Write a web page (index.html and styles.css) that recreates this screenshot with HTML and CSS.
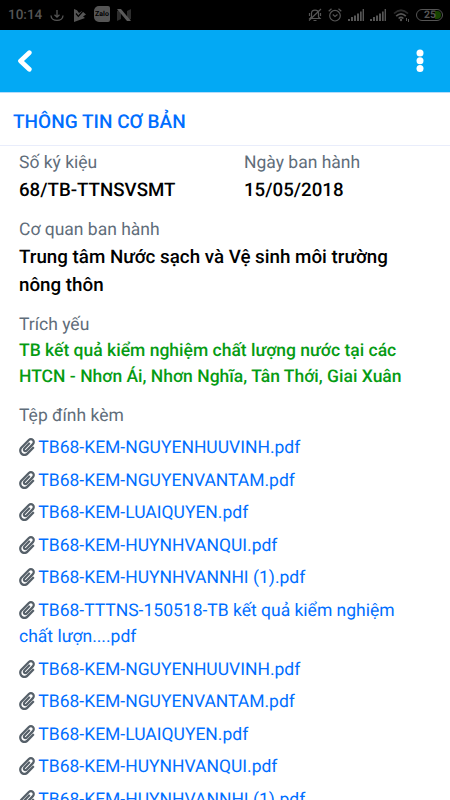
FILE: index.html
```html
<!DOCTYPE html>
<html lang="vi">
<head>
<meta charset="utf-8">
<title>Thông tin cơ bản</title>
<link rel="stylesheet" href="styles.css">
</head>
<body>
<svg width="0" height="0" class="defs">
  <symbol id="clip" viewBox="0 0 448 512"><path d="M43.246 466.142c-58.43-60.289-57.341-157.511 1.386-217.581L254.392 34c44.316-45.332 116.351-45.336 160.671 0 43.89 44.894 43.943 117.329 0 162.276L232.214 383.128c-29.855 30.537-78.633 30.111-107.982-.998-28.275-29.970-27.368-77.473 1.452-106.953l143.743-146.835c6.182-6.314 16.312-6.422 22.626-.241l22.861 22.379c6.315 6.182 6.422 16.312.241 22.626L171.427 319.927c-4.932 5.045-5.236 13.428-.648 18.292 4.372 4.634 11.245 4.711 15.688.165l182.849-186.851c19.613-20.062 19.613-52.725-.011-72.798-19.189-19.627-49.957-19.637-69.154 0L90.390 293.295c-34.763 35.560-35.299 93.120-1.191 128.313 34.010 35.093 88.985 35.137 123.058.286l172.060-175.999c6.177-6.319 16.307-6.433 22.626-.256l22.877 22.364c6.319 6.177 6.434 16.307.256 22.626l-172.060 175.998c-59.576 60.938-155.943 60.216-214.770-.485z"/></symbol>
  <symbol id="signal" viewBox="0 0 17 13"><path d="M0 10h2v2H0zM3 8h2v4H3zM6 6.500h2V12H6zM9 4.500h2V12H9zM12 2.500h1.700V12H12zM14.600 0H16v12h-1.400z"/></symbol>
</svg>
<div class="status">
  <span class="time">10:14</span>
  <svg class="s-save" viewBox="0 0 14 12"><path d="M7 0v7M4.500 4.800 7 7.200l2.500-2.400M1 5.500C1 12 13 12 13 5.500" fill="none" stroke="currentColor" stroke-width="1.300"/></svg>
  <svg class="s-play" viewBox="0 0 13 13"><path fill="currentColor" d="M1 0 4 1.300 6 4 9 2l4 3.500-3 2L12 9 1 13z"/><path d="M3 4.500l2.300 2.800L10 2" fill="none" stroke="#000" stroke-width="1.200"/></svg>
  <span class="zalo">Zalo</span>
  <svg class="s-n" viewBox="0 0 14 12"><path fill="#2d2d2d" d="M0 2 4 0v10l-4 2zM10 2l4-2v10l-4 2z"/><path fill="#5a5a5a" d="M0 0h4l10 12h-4z"/></svg>
  <span class="grow"></span>
  <svg class="s-bell" viewBox="0 0 14 14"><path d="M2 10.500h10L10.500 9V5.500C10.500 1 3.500 1 3.500 5.500V9zM5.500 12.500h3M13 1 1 12.500M1.500 5v3M12.500 5v3" fill="none" stroke="currentColor" stroke-width="1.200"/></svg>
  <svg class="s-alarm" viewBox="0 0 14 14"><g fill="none" stroke="currentColor" stroke-width="1.200"><circle cx="7" cy="7.700" r="5.300"/><path d="M4.800 6.500 7 8.500l2.500-2M.7 3.300 3.500.8M13.300 3.300 10.500.8"/></g></svg>
  <svg class="s-sig"><use href="#signal"/></svg>
  <svg class="s-sig"><use href="#signal"/></svg>
  <svg class="s-wifi" viewBox="0 0 17 13"><g fill="none" stroke="currentColor" stroke-width="1.700"><path d="M1 4.500Q8 -2 15 4.500" stroke="#2b2b2b"/><path d="M3.200 7.200Q8 2.500 12.800 7.200M5.600 9.500Q8 7.200 10.400 9.500"/></g><circle cx="8" cy="11" r="1.200" fill="currentColor"/><path d="M13.500 9v3M15.500 10v3" stroke="currentColor"/></svg>
  <span class="battery"><i></i><b>25</b></span>
</div>
<header class="bar">
  <svg class="back" viewBox="0 0 16 22"><path d="M12.300 2.700 3.500 11l8.800 8.300" fill="none" stroke="#fff" stroke-width="4.700" stroke-linecap="round" stroke-linejoin="round"/></svg>
  <svg class="more" viewBox="0 0 8 24" fill="#fff"><circle cx="4" cy="4" r="3.500"/><circle cx="4" cy="11.800" r="3.500"/><circle cx="4" cy="19.600" r="3.500"/></svg>
</header>
<h1 class="title">THÔNG TIN CƠ BẢN</h1>
<main class="content">
  <div class="row">
    <section><div class="label">Số ký kiệu</div><div class="value">68/TB-TTNSVSMT</div></section>
    <section><div class="label">Ngày ban hành</div><div class="value">15/05/2018</div></section>
  </div>
  <section class="field"><div class="label">Cơ quan ban hành</div><div class="value agency">Trung tâm Nước sạch và Vệ sinh môi trường<br>nông thôn</div></section>
  <section class="field"><div class="label">Trích yếu</div><div class="value summary">TB kết quả kiểm nghiệm chất lượng nước tại các<br>HTCN - Nhơn Ái, Nhơn Nghĩa, Tân Thới, Giai Xuân</div></section>
  <section class="field"><div class="label">Tệp đính kèm</div>
    <ul class="files">
      <li><svg><use href="#clip"/></svg><a>TB68-KEM-NGUYENHUUVINH.pdf</a></li>
      <li><svg><use href="#clip"/></svg><a>TB68-KEM-NGUYENVANTAM.pdf</a></li>
      <li><svg><use href="#clip"/></svg><a>TB68-KEM-LUAIQUYEN.pdf</a></li>
      <li><svg><use href="#clip"/></svg><a>TB68-KEM-HUYNHVANQUI.pdf</a></li>
      <li><svg><use href="#clip"/></svg><a>TB68-KEM-HUYNHVANNHI (1).pdf</a></li>
      <li><svg><use href="#clip"/></svg><a>TB68-TTTNS-150518-TB kết quả kiểm nghiệm<br>chất lượn....pdf</a></li>
      <li><svg><use href="#clip"/></svg><a>TB68-KEM-NGUYENHUUVINH.pdf</a></li>
      <li><svg><use href="#clip"/></svg><a>TB68-KEM-NGUYENVANTAM.pdf</a></li>
      <li><svg><use href="#clip"/></svg><a>TB68-KEM-LUAIQUYEN.pdf</a></li>
      <li><svg><use href="#clip"/></svg><a>TB68-KEM-HUYNHVANQUI.pdf</a></li>
      <li><svg><use href="#clip"/></svg><a>TB68-KEM-HUYNHVANNHI (1).pdf</a></li>
    </ul>
  </section>
</main>
</body>
</html>
```
FILE: styles.css
```css
* { box-sizing: border-box; }
html, body { margin: 0; height: 800px; overflow: hidden; }
body { background: #fff; font-family: Roboto, sans-serif; color: #000; display: flex; flex-direction: column; text-rendering: geometricPrecision; }
.defs { display: none; }
svg { display: block; flex: none; }
.status { height: 30px; flex: none; background: #000; color: #555; display: flex; align-items: center; padding: 0 7px 0 8px; }
.time { font-size: 13.500px; font-weight: 500; width: 42px; line-height: 32px; }
.s-save { width: 14px; height: 12px; margin-top: 2px; }
.s-play { width: 13px; height: 13px; margin-left: 9px; }
.zalo { width: 16px; height: 16px; margin: -2px 7px 0 8px; border-radius: 5px 2px 2px 5px; background: #555; color: #000; font-size: 7px; font-weight: 700; line-height: 16px; text-align: center; }
.s-n { width: 14px; height: 12px; }
.grow { flex: 1; }
.s-bell { width: 14px; height: 14px; margin-right: 6px; }
.s-alarm { width: 14px; height: 14px; margin-right: 6px; }
.s-sig { width: 17px; height: 13px; fill: #555; margin-right: 5px; }
.s-wifi { width: 17px; height: 13px; margin: 1px 6px 0 1px; }
.battery { position: relative; width: 27px; height: 12px; border: 1.500px solid #555; border-radius: 6px; font-size: 10.500px; line-height: 10px; padding-left: 7px; }
.battery b { position: relative; }
.battery i { position: absolute; right: 1px; top: 1px; width: 6px; height: 8px; background: #174500; border-radius: 0 4px 4px 0; }
.bar { height: 63px; flex: none; background: #03a9f4; border-bottom: 1px solid #b5dcfa; display: flex; justify-content: space-between; align-items: center; padding: 0 26.500px 0 17px; }
.back { width: 16px; height: 22px; }
.more { width: 8px; height: 24px; }
.title { margin: 0; height: 53px; flex: none; padding: 2px 13px 0; border-bottom: 1px solid #e9edfb; font-size: 19.050px; font-weight: 500; line-height: 54px; color: #006eff; white-space: nowrap; }
.content { padding: 4px 19px 0; white-space: nowrap; }
.row { display: grid; grid-template-columns: 225px 1fr; height: 67px; }
.label { font-size: 17.500px; line-height: 27px; color: #5f6d7a; }
.value { font-size: 18.700px; font-weight: 500; line-height: 28px; margin-top: -1px; }
.value.agency { font-size: 18.780px; margin-bottom: 13px; }
.field { margin-bottom: 12px; }
.value.summary { color: #059b13; font-size: 17.530px; line-height: 26px; margin: -1px 0 13px; }
.files { list-style: none; margin: 5px 0 0; padding: 0; }
.files li { font-size: 17.500px; line-height: 26.500px; margin-bottom: 6px; color: #006eff; }
.files svg { display: inline-block; width: 16px; height: 18px; margin: 0 3.600px 0 -.3px; vertical-align: -3px; fill: #566069; }
```
